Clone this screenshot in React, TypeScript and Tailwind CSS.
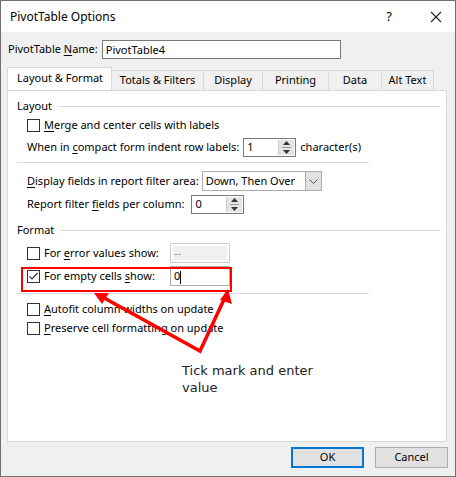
import React from "react";

const U = ({ c }: { c: string }) => <span className="underline underline-offset-2">{c}</span>;

const Cb = ({ checked }: { checked?: boolean }) => (
  <span className="w-[13px] h-[13px] border border-[#333] bg-white inline-flex items-center justify-center shrink-0">
    {checked && (
      <svg width="11" height="11" viewBox="0 0 11 11"><path d="M1.5 5.5 L4 8 L9.5 2" stroke="#333" strokeWidth="1.2" fill="none" /></svg>
    )}
  </span>
);

const Spin = ({ w, v }: { w: string; v: string }) => (
  <div className={`${w} h-[19px] border border-[#7a7a7a] bg-white flex items-center`}>
    <span className="flex-1 pl-[3px]">{v}</span>
    <div className="w-[16px] h-[15px] mr-[1px] bg-[#e5e5e5] border-l border-[#ccc] flex flex-col items-center justify-center gap-[2px]">
      <svg width="7" height="4"><path d="M0 4 L3.5 0 L7 4Z" fill="#333" /></svg>
      <div className="w-[9px] h-px bg-[#999]" />
      <svg width="7" height="4"><path d="M0 0 L3.5 4 L7 0Z" fill="#333" /></svg>
    </div>
  </div>
);

export default function App() {
  return (
    <div className="w-[456px] h-[477px] border border-[#6f6f6f] bg-[#f0f0f0] text-[11px] text-black relative flex flex-col whitespace-nowrap" style={{ fontFamily: "'Noto Sans', 'Open Sans', sans-serif" }}>
      <div className="h-[31px] bg-white flex items-center pl-[9px] pr-[13px] text-[12px] shrink-0">
        <span className="flex-1">PivotTable Options</span>
        <span className="mr-[38px] text-[13px]">?</span>
        <svg width="12" height="12"><path d="M1 1 L11 11 M11 1 L1 11" stroke="#222" strokeWidth="1.1" /></svg>
      </div>
      <div className="flex items-center pl-[7px] mt-[7px] h-[20px]">
        <span>PivotTable <U c="N" />ame:</span>
        <div className="ml-[4px] w-[239px] h-[19px] border border-[#7a7a7a] bg-white pl-[3px] leading-[17px]">PivotTable4</div>
      </div>
      <div className="flex items-end pl-[6px] mt-[9px] h-[22px] relative z-10">
        <div className="h-[23px] w-[105px] bg-white border border-[#d9d9d9] border-b-0 pl-[9px] pt-[2px]">Layout &amp; Format</div>
        {[["Totals & Filters", 92], ["Display", 59], ["Printing", 66], ["Data", 53], ["Alt Text", 52]].map(([t, w]) => (
          <div key={t as string} style={{ width: w as number }} className="h-[20px] bg-[#f0f0f0] border border-[#d9d9d9] border-b-0 border-l-0 flex items-center justify-center">{t}</div>
        ))}
      </div>
      <div className="mx-[6px] w-[440px] h-[352px] bg-white border border-[#d9d9d9] relative pl-[9px] pt-[5px]">
        <div className="flex items-center h-[20px]"><span>Layout</span><div className="flex-1 h-px bg-[#dcdcdc] ml-[6px] mr-[5px]" /></div>
        <div className="flex items-center h-[19px] pl-[10px] gap-[4px]"><Cb /><span><U c="M" />erge and center cells with labels</span></div>
        <div className="flex items-center h-[22px] pl-[10px] mt-[1px]"><span>When in <U c="c" />ompact form indent row labels:</span><div className="ml-[4px]"><Spin w="w-[53px]" v="1" /></div><span className="ml-[4px]">character(s)</span></div>
        <div className="h-px bg-[#dcdcdc] w-[352px] mt-[4px]" />
        <div className="flex items-center h-[22px] pl-[10px] mt-[7px]"><span><U c="D" />isplay fields in report filter area:</span>
          <div className="ml-[3px] w-[120px] h-[20px] border border-[#adadad] bg-white flex items-center"><span className="flex-1 pl-[3px]">Down, Then Over</span><div className="w-[16px] h-[18px] bg-[#e1e1e1] border-l border-[#adadad] flex items-center justify-center"><svg width="9" height="5"><path d="M0.5 0.5 L4.5 4.5 L8.5 0.5" stroke="#555" fill="none" /></svg></div></div>
        </div>
        <div className="flex items-center h-[21px] pl-[10px] mt-[2px]"><span>Report filter <U c="f" />ields per column:</span><div className="ml-[7px]"><Spin w="w-[53px]" v="0" /></div></div>
        <div className="flex items-center h-[20px] mt-[5px]"><span>Format</span><div className="flex-1 h-px bg-[#dcdcdc] ml-[6px] mr-[5px]" /></div>
        <div className="flex items-center h-[22px] pl-[10px] gap-[4px] mt-[2px]"><Cb /><span className="w-[122px]">For <U c="e" />rror values show:</span><div className="w-[60px] h-[20px] border border-[#ccc] bg-white p-[2px]"><div className="bg-[#f0f0f0] h-full text-[#999] pl-[1px] leading-[14px]">--</div></div></div>
        <div className="flex items-center h-[22px] pl-[10px] gap-[4px] mt-[1px]"><Cb checked /><span className="w-[122px]">For empty cells <U c="s" />how:</span><div className="w-[60px] h-[20px] border border-[#adadad] bg-white pl-[3px] leading-[18px]">0<span className="inline-block w-px h-[13px] bg-black align-middle" /></div></div>
        <div className="h-px bg-[#dcdcdc] w-[352px] mt-[6px]" />
        <div className="flex items-center h-[19px] pl-[10px] gap-[4px] mt-[6px]"><Cb /><span><U c="A" />utofit column widths on update</span></div>
        <div className="flex items-center h-[19px] pl-[10px] gap-[4px]"><Cb /><span><U c="P" />reserve cell formatting on update</span></div>
        <div className="ml-[165px] mt-[24px] text-[13px] leading-[17px] text-[#222]" style={{ fontFamily: "'DejaVu Sans', sans-serif" }}>Tick mark and enter<br />value</div>
      </div>
      <div className="flex justify-end gap-[11px] pr-[7px] mt-[5px]">
        <div className="w-[73px] h-[21px] border-2 border-[#0078d7] bg-[#e1e1e1] flex items-center justify-center">OK</div>
        <div className="w-[73px] h-[21px] border border-[#adadad] bg-[#e1e1e1] flex items-center justify-center">Cancel</div>
      </div>
      <svg className="absolute left-0 top-0 pointer-events-none" width="456" height="477">
        <rect x="21" y="267" width="209" height="23" fill="none" stroke="#f00" strokeWidth="2" />
        <path d="M96 293 L199 350 L226 292" stroke="#f00" strokeWidth="3.5" fill="none" strokeLinejoin="miter" />
        <path d="M93 292 L108 292 L101 303Z" fill="#f00" />
        <path d="M227 288 L231 303 L219 299Z" fill="#f00" />
      </svg>
    </div>
  );
}
